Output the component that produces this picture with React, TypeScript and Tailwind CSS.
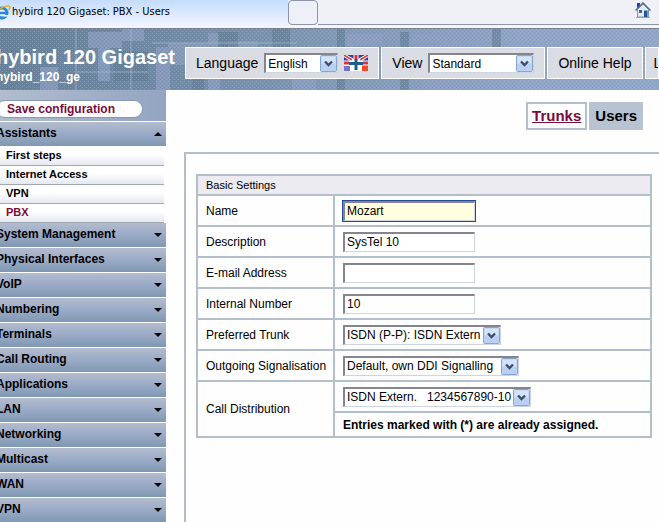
import type { ReactNode } from 'react'

type SelectProps = {
  id: string
  value: string
  width: string
}

const shortcuts = ['First steps', 'Internet Access', 'VPN', 'PBX']

const sections = [
  'System Management',
  'Physical Interfaces',
  'VoIP',
  'Numbering',
  'Terminals',
  'Call Routing',
  'Applications',
  'LAN',
  'Networking',
  'Multicast',
  'WAN',
  'VPN',
]

const cell = 'border-2 border-[#b3bfcb]'
const inset = 'border border-t-2 border-l-2 border-[#cdd5de] border-t-[#85858f] border-l-[#85858f]'

function Select({ id, value, width }: SelectProps) {
  return (
    <span className={`relative flex h-5 ${width}`}>
      <select
        id={id}
        className={`w-full appearance-none bg-white pl-0.5 text-xs leading-4 text-black ${inset}`}
      >
        <option>{value}</option>
      </select>
      <svg
        className="pointer-events-none absolute top-0.5 right-px h-[17px] w-[17px]"
        viewBox="0 0 17 17"
        aria-hidden="true"
      >
        <rect x="0.5" y="0.5" width="16" height="16" rx="1" fill="#b9d0f3" stroke="#86a6cc" />
        <rect x="1.5" y="1.5" width="14" height="7" fill="#d3e3fa" />
        <path d="M5 6.500l3.500 3.500L12 6.500" fill="none" stroke="#3f4d66" strokeWidth="2.400" />
      </svg>
    </span>
  )
}

function ExplorerIcon() {
  return (
    <svg className="h-4 w-4 shrink-0" viewBox="4 0 16 16" aria-hidden="true">
      <circle cx="10" cy="9" r="5" fill="#d9f0fc" stroke="#2f86d6" strokeWidth="3" />
      <path d="M6 9h9" stroke="#2f86d6" strokeWidth="2.400" />
      <path d="M11.500 11h5v1.600h-5z" fill="#e9f4fd" />
      <path d="M3 14C2 9 10 1 17 2c1.500.5.5 3-.5 4" fill="none" stroke="#e3b42b" strokeWidth="1.500" />
    </svg>
  )
}

function HomeIcon() {
  return (
    <svg className="h-4 w-4" viewBox="0 0 16 16" aria-hidden="true">
      <path d="M2 1h3v5H2z" fill="#2638b8" />
      <path d="M2.500 7.500 8 2l5.500 5.500V15h-11z" fill="#e4ebf3" stroke="#8496ad" />
      <path d="M.5 8.500 8 1l7.500 7.500" fill="none" stroke="#557199" strokeWidth="1.500" />
      <path d="M4 8h3v3H4z" fill="#49617d" />
      <path d="M9 8.500h3.500V15H9z" fill="#1f57a6" />
      <path d="M1 15.500h14" stroke="#8fa69a" />
    </svg>
  )
}

function Flag() {
  return (
    <svg className="h-4 w-6" viewBox="0 0 24 16" aria-hidden="true">
      <path d="M0 0h24v16H0z" fill="#fff" />
      <path d="M3 0h7v4zM14 0h7l-7 4zM0 2l6 4H0zM24 2v4h-6z" fill="#34409a" />
      <path d="M0 11h6v5H0z" fill="#7672c0" />
      <path d="M18 10h6v6h-6z" fill="#ee4a2a" />
      <path d="M0 0l8 5M24 0l-8 5" stroke="#d8343f" strokeWidth="1.500" />
      <path d="M12 0v16M0 8h24" stroke="#fff" strokeWidth="5" />
      <path d="M12 0v5M0 8h5M19 8h5" stroke="#d8343f" strokeWidth="3" />
      <path d="M12 4v11M5 8.500h14" stroke="#1c5d8c" strokeWidth="3" />
    </svg>
  )
}

function Skyline() {
  return (
    <svg
      className="absolute inset-0 h-full w-full"
      viewBox="0 0 667 61"
      preserveAspectRatio="none"
      aria-hidden="true"
    >
      <defs>
        <linearGradient id="sky">
          <stop offset="0" stopColor="#667f99" />
          <stop offset="0.25" stopColor="#6f88a3" />
          <stop offset="0.5" stopColor="#8098b4" />
          <stop offset="0.8" stopColor="#91a5c6" />
          <stop offset="1" stopColor="#92a8c8" />
        </linearGradient>
        <pattern id="grain" width="4" height="4" patternUnits="userSpaceOnUse">
          <path d="M0 0h1v1H0zM2 2h1v1H2z" fill="#a9b4cd" />
          <path d="M2 0h1v1H2zM0 2h1v1H0z" fill="#6c93a6" />
        </pattern>
      </defs>
      <path d="M0 0h667v61H0z" fill="url(#sky)" />
      <g fill="#8ea0c2" opacity="0.7">
        <path d="M96 3h34v16H96zM106 12h12v40h-12zM48 38h18v23H48zM130 0h22v12h-22zM164 18h14v43h-14zM176 14h40v22h-40zM216 4h12v57h-12zM236 12h30v10h-30zM300 48h24v13h-24zM355 5h35v12h-35zM420 5h50v18h-50zM430 50h40v11h-40z" />
      </g>
      <g fill="#5f7993" opacity="0.6">
        <path d="M122 22h34v30h-34zM226 3h20v20h-20zM280 0h18v18h-18zM345 0h8v61h-8zM408 3h9v58h-9zM500 0h9v18h-9zM200 50h12v11h-12z" />
      </g>
      <path d="M84 0v61M139 0v61M84 43h72M160 14h145" fill="none" stroke="#a9b8ce" opacity="0.7" />
      <path d="M0 0h667v61H0z" fill="url(#grain)" opacity="0.4" />
    </svg>
  )
}

function ToolbarBox({ children, grow }: { children: ReactNode; grow?: boolean }) {
  return (
    <div
      className={`flex h-8 items-center gap-1.5 border border-white bg-[#dadce4] text-sm whitespace-nowrap text-black ${
        grow ? 'min-w-0 flex-1 overflow-hidden pl-2' : 'shrink-0 px-2.5'
      }`}
    >
      {children}
    </div>
  )
}

function BrowserBar() {
  return (
    <div className="border-b border-[#7c8290] bg-[#f4f5fb]">
      <div className="flex h-7 bg-[#f4f5fb]">
        <div className="flex w-[296px] items-start bg-linear-to-b from-[#c5dcfc] to-[#f3f6fe] pt-1 pl-1">
          <ExplorerIcon />
          <span className="font-['DejaVu_Sans_Condensed','DejaVu_Sans',sans-serif] text-[11px] leading-4 whitespace-nowrap text-black">
            hybird 120 Gigaset: PBX - Users
          </span>
        </div>
        <div className="h-[25px] w-[30px] rounded-sm border border-[#8c94a8] bg-[#edf0f8]" />
        <div className="flex h-[25px] flex-1 items-start justify-end border-b border-[#8c94a8] bg-[#f0f1f6] pt-0.5 pr-2">
          <HomeIcon />
        </div>
      </div>
    </div>
  )
}

function Header() {
  return (
    <header className="relative flex h-[61px] overflow-hidden">
      <Skyline />
      <div className="relative w-[193px] shrink-0 pt-4 pl-1 font-bold whitespace-nowrap text-white">
        <h1 className="text-xl leading-6">hybird 120 Gigaset</h1>
        <p className="text-xs leading-4">hybird_120_ge</p>
      </div>
      <div className="relative flex min-w-0 flex-1 gap-0.5 pt-[18px]">
        <ToolbarBox>
          <label htmlFor="language">Language</label>
          <Select id="language" value="English" width="w-[74px]" />
          <Flag />
        </ToolbarBox>
        <ToolbarBox>
          <label htmlFor="view">View</label>
          <Select id="view" value="Standard" width="w-[106px]" />
        </ToolbarBox>
        <ToolbarBox>
          <a href="#help">Online Help</a>
        </ToolbarBox>
        <ToolbarBox grow>
          <a href="#logout">Logout</a>
        </ToolbarBox>
      </div>
    </header>
  )
}

function SectionButton({ name, open }: { name: string; open?: boolean }) {
  return (
    <button
      type="button"
      aria-expanded={Boolean(open)}
      className="flex h-[25px] w-full items-center justify-between border-b border-white bg-linear-to-b from-[#b2bccd] via-[#9aaac7] to-[#7f98b1] px-1 pb-0.5 text-xs font-bold text-black"
    >
      {name}
      <svg className="mt-0.5 h-1 w-2" viewBox="0 0 8 4" aria-hidden="true">
        <path d={open ? 'M0 4l4-4 4 4z' : 'M0 0h8L4 4z'} />
      </svg>
    </button>
  )
}

function Sidebar() {
  return (
    <nav className="w-[174px] shrink-0">
      <div className="h-8 border-b border-white bg-linear-to-r from-[#b3bdce] to-[#93a5c2] pt-2.5 pl-1">
        <button
          type="button"
          className="block h-[18px] w-[147px] rounded-full border border-[#8798b4] bg-white pl-2.5 text-left text-xs leading-4 font-bold text-[#7a0a3c]"
        >
          Save configuration
        </button>
      </div>
      <SectionButton name="Assistants" open />
      <ul className="mr-0.5">
        {shortcuts.map((name) => (
          <li
            key={name}
            className="h-[19px] border-b border-[#a2a8b2] bg-linear-to-b from-white from-40% to-[#e6e8f0] pl-3.5 text-[11px] leading-4 font-bold"
          >
            <a href="#shortcut" className={name === 'PBX' ? 'text-[#7a0a3c]' : 'text-black'}>
              {name}
            </a>
          </li>
        ))}
      </ul>
      {sections.map((name) => (
        <SectionButton key={name} name={name} />
      ))}
    </nav>
  )
}

function Row({ id, label, children }: { id: string; label: string; children: ReactNode }) {
  return (
    <tr className="h-[31px]">
      <th scope="row" className={`${cell} pl-2 text-left font-normal whitespace-nowrap`}>
        <label htmlFor={id}>{label}</label>
      </th>
      <td className={`${cell} pl-2`}>{children}</td>
    </tr>
  )
}

function SettingsTable() {
  const input = `block h-5 w-[132px] px-0.5 text-xs leading-4 text-black outline-none ${inset}`

  return (
    <table className="w-full border-collapse text-xs leading-4 text-black">
      <colgroup>
        <col className="w-[137px]" />
        <col />
      </colgroup>
      <thead>
        <tr className="h-5">
          <th colSpan={2} className={`${cell} bg-[#ebebf1] pl-2 text-left text-[11px] font-normal`}>
            Basic Settings
          </th>
        </tr>
      </thead>
      <tbody>
        <Row id="name" label="Name">
          <input id="name" defaultValue="Mozart" className={`${input} bg-[#ffffdf] ring-1 ring-[#234a94]`} />
        </Row>
        <Row id="description" label="Description">
          <input id="description" defaultValue="SysTel 10" className={`${input} bg-white`} />
        </Row>
        <Row id="email" label="E-mail Address">
          <input id="email" type="email" className={`${input} bg-white`} />
        </Row>
        <Row id="number" label="Internal Number">
          <input id="number" defaultValue="10" className={`${input} bg-white`} />
        </Row>
        <Row id="trunk" label="Preferred Trunk">
          <Select id="trunk" value="ISDN (P-P): ISDN Extern" width="w-[158px]" />
        </Row>
        <Row id="signalisation" label="Outgoing Signalisation">
          <Select id="signalisation" value="Default, own DDI Signalling" width="w-[176px]" />
        </Row>
        <tr className="h-[31px]">
          <th scope="row" rowSpan={2} className={`${cell} pl-2 text-left font-normal`}>
            <label htmlFor="distribution">Call Distribution</label>
          </th>
          <td className={`${cell} pl-2`}>
            <Select id="distribution" value={'ISDN Extern.\u00a0\u00a0 1234567890-10'} width="w-[188px]" />
          </td>
        </tr>
        <tr className="h-[25px]">
          <td className={`${cell} pl-2 font-bold`}>Entries marked with (*) are already assigned.</td>
        </tr>
      </tbody>
    </table>
  )
}

export default function App() {
  return (
    <div className="min-h-screen overflow-hidden bg-[#fefefe] font-['Liberation_Sans',Arial,sans-serif]">
      <div className="-ml-2">
        <BrowserBar />
        <Header />
        <div className="flex">
          <Sidebar />
          <main className="flex min-w-0 flex-1 flex-col pt-3 pl-[18px]">
            <div className="flex justify-end gap-0.5 pr-4 text-[15px] leading-6 font-bold">
              <a href="#trunks" className="border-2 border-[#b3bfcb] px-1 text-[#7a0a3c] underline">
                Trunks
              </a>
              <a href="#users" className="bg-[#b8c3d1] px-1.5 py-0.5 text-black" aria-current="page">
                Users
              </a>
            </div>
            <section className="mt-[22px] flex-1 border-t-2 border-l-2 border-[#b3bfcb] pt-5 pr-[7px] pl-2.5">
              <SettingsTable />
            </section>
          </main>
        </div>
      </div>
    </div>
  )
}
